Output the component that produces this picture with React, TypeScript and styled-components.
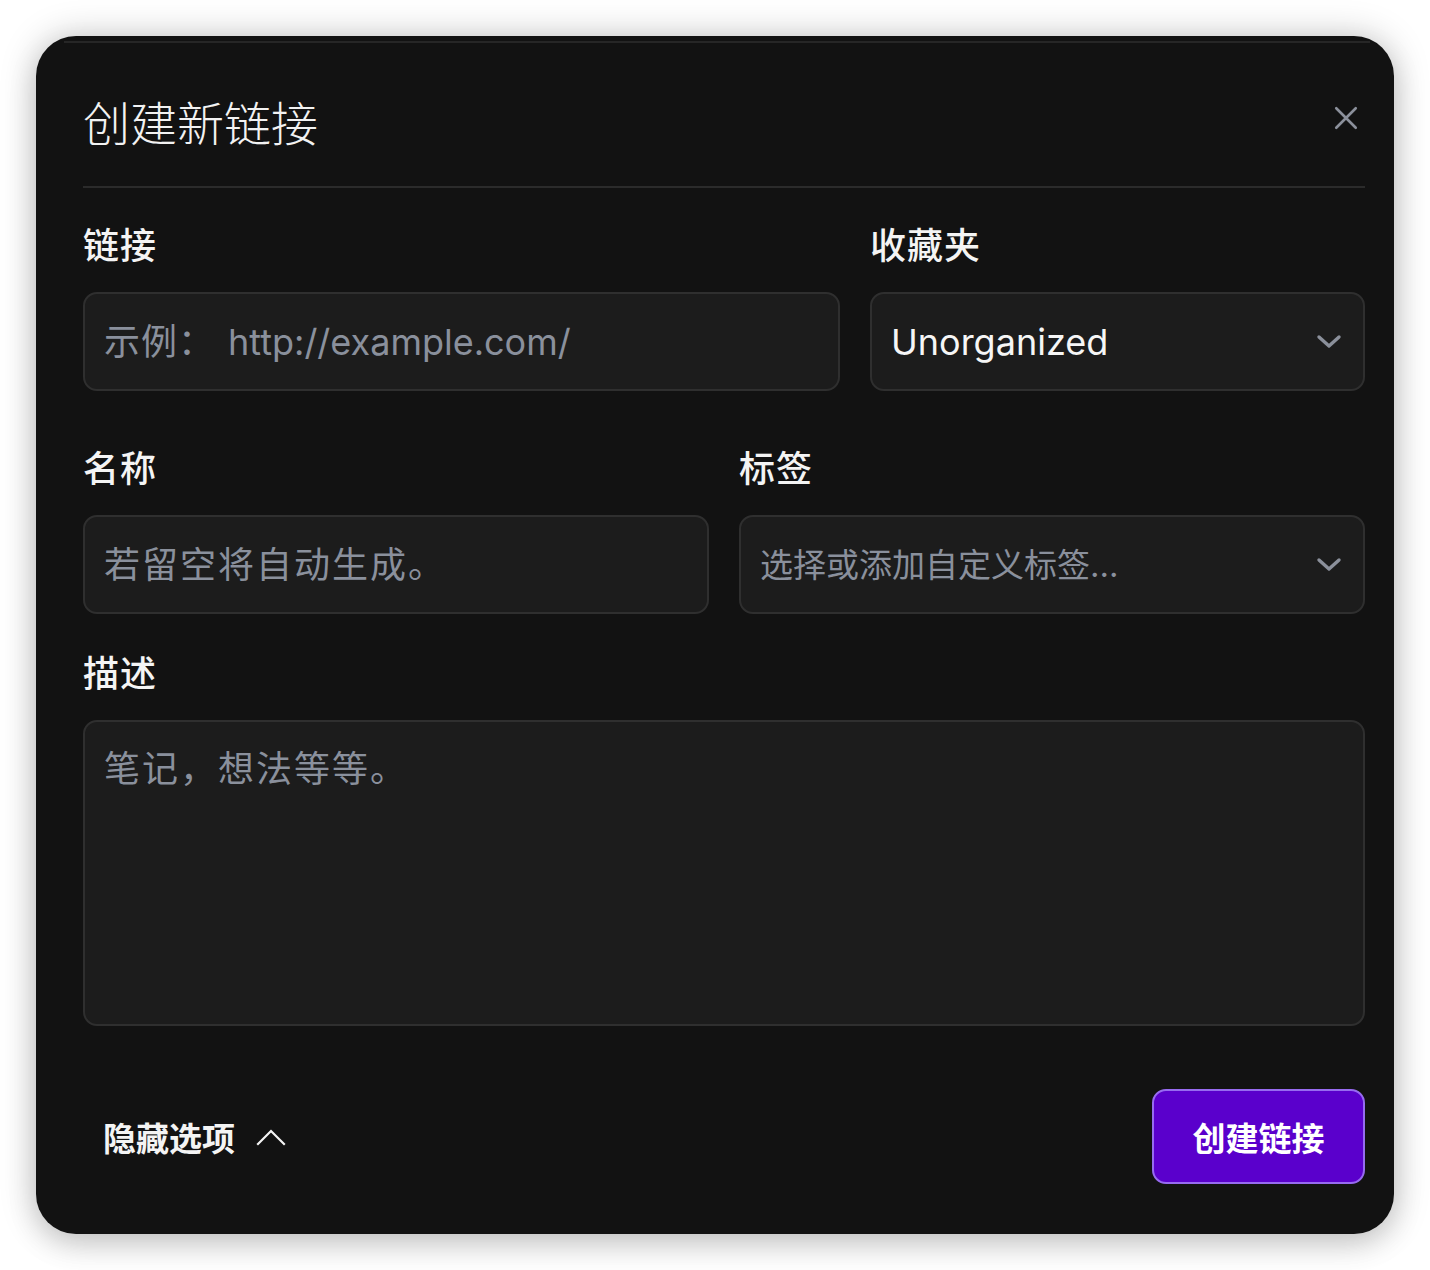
import React from "react";
import styled, { createGlobalStyle } from "styled-components";

//////////////////////// GLOBAL ////////////////////////

const GlobalStyle = createGlobalStyle`
  html, body {
    margin: 0;
    padding: 0;
    background: #ffffff;
  }
  body {
    font-family: "Inter", "Noto Sans CJK SC", sans-serif;
  }
  * {
    box-sizing: border-box;
  }
`;

//////////////////////// STYLED-COMPONENTS ////////////////////////

const Page = styled.div`
  padding: 36px;
`;

const Card = styled.div`
  position: relative;
  width: 1358px;
  height: 1198px;
  padding: 57px 29px 50px 47px;
  border-radius: 40px;
  background-color: #121212;
  box-shadow: 0 0 36px rgba(0, 0, 0, 0.22), 0 12px 30px rgba(0, 0, 0, 0.12);
  display: flex;
  flex-direction: column;

  &::before {
    content: "";
    position: absolute;
    top: 5px;
    left: 28px;
    right: 24px;
    height: 2px;
    background: #262626;
  }
`;

const Header = styled.div`
  display: flex;
  align-items: center;
  justify-content: space-between;
  height: 56px;
`;

const Title = styled.h2`
  margin: 0;
  font-family: "Noto Sans CJK SC", sans-serif;
  font-size: 47px;
  font-weight: 300;
  line-height: 56px;
  color: #f2f2f2;
`;

const CloseButton = styled.button`
  display: flex;
  align-items: center;
  justify-content: center;
  width: 36px;
  height: 36px;
  margin-right: 1px;
  margin-top: -7px;
  padding: 0;
  border: 0;
  background: transparent;
  color: #8b909b;
  cursor: pointer;
`;

const Divider = styled.div`
  height: 2px;
  margin-top: 37px;
  background-color: #2b2b2b;
`;

const Row = styled.div<{ $cols: string; $mt: number }>`
  display: grid;
  grid-template-columns: ${(p) => p.$cols};
  column-gap: 30px;
  margin-top: ${(p) => p.$mt}px;
`;

const Field = styled.div`
  display: flex;
  flex-direction: column;
  gap: 27px;
  min-width: 0;
`;

const Label = styled.label`
  font-family: "Noto Sans CJK SC", sans-serif;
  font-size: 36px;
  font-weight: 500;
  letter-spacing: 1px;
  line-height: 44px;
  color: #f4f4f4;
`;

const Box = styled.div<{ $h: number }>`
  position: relative;
  display: flex;
  align-items: center;
  height: ${(p) => p.$h}px;
  padding: 0 22px 0 19px;
  border: 2px solid #2f2f2f;
  border-radius: 14px;
  background-color: #1c1c1c;
`;

const TextArea = styled(Box)`
  align-items: flex-start;
  padding-top: 22px;
`;

const Placeholder = styled.span<{ $size?: number; $spacing?: number }>`
  flex: 1;
  font-size: ${(p) => p.$size ?? 36}px;
  letter-spacing: ${(p) => p.$spacing ?? 0}px;
  line-height: 50px;
  color: #8a909c;
  white-space: nowrap;
`;

const Prefix = styled.span`
  margin-right: 13px;
  letter-spacing: 1px;
`;

const Value = styled.span`
  flex: 1;
  font-size: 36px;
  line-height: 50px;
  color: #f6f6f6;
`;

const Chevron = styled.span`
  display: flex;
  margin-right: -1px;
  color: #8b909b;
`;

const Footer = styled.div`
  display: flex;
  align-items: center;
  justify-content: space-between;
  margin-top: auto;
`;

const ToggleButton = styled.button`
  display: flex;
  align-items: center;
  gap: 21px;
  margin-left: 20px;
  padding: 0;
  border: 0;
  background: transparent;
  font-family: "Noto Sans CJK SC", sans-serif;
  font-size: 33px;
  font-weight: 700;
  color: #f4f4f4;
  cursor: pointer;
`;

const PrimaryButton = styled.button`
  width: 213px;
  height: 95px;
  border: 2px solid #976bf0;
  border-radius: 14px;
  background-color: #5a00cc;
  font-family: "Noto Sans CJK SC", sans-serif;
  font-size: 33px;
  font-weight: 700;
  color: #ffffff;
  cursor: pointer;
`;

//////////////////////// ICONS ////////////////////////

const XIcon = () => (
  <svg width="26" height="26" viewBox="0 0 24 24" fill="none" stroke="currentColor" strokeWidth="2.4" strokeLinecap="round">
    <path d="M3 3 L21 21 M21 3 L3 21" />
  </svg>
);

const DownIcon = () => (
  <svg width="26" height="16" viewBox="0 0 26 16" fill="none" stroke="currentColor" strokeWidth="3.4" strokeLinecap="round" strokeLinejoin="round">
    <path d="M3 3 L13 12 L23 3" />
  </svg>
);

const UpIcon = () => (
  <svg width="30" height="18" viewBox="0 0 30 18" fill="none" stroke="currentColor" strokeWidth="2.2" strokeLinecap="square">
    <path d="M2 16 L15 3 L28 16" />
  </svg>
);

//////////////////////// COMPONENT ////////////////////////

const App = () => {
  return (
    <>
      <GlobalStyle />
      <Page>
        <Card>
          <Header>
            <Title>创建新链接</Title>
            <CloseButton aria-label="close">
              <XIcon />
            </CloseButton>
          </Header>
          <Divider />

          <Row $cols="757fr 495fr" $mt={33}>
            <Field>
              <Label>链接</Label>
              <Box $h={99}>
                <Placeholder>
                  <Prefix>示例：</Prefix>
                  http://example.com/
                </Placeholder>
              </Box>
            </Field>
            <Field>
              <Label>收藏夹</Label>
              <Box $h={99}>
                <Value>Unorganized</Value>
                <Chevron>
                  <DownIcon />
                </Chevron>
              </Box>
            </Field>
          </Row>

          <Row $cols="1fr 1fr" $mt={53}>
            <Field>
              <Label>名称</Label>
              <Box $h={99}>
                <Placeholder $spacing={2}>若留空将自动生成。</Placeholder>
              </Box>
            </Field>
            <Field>
              <Label>标签</Label>
              <Box $h={99}>
                <Placeholder $size={33}>选择或添加自定义标签...</Placeholder>
                <Chevron>
                  <DownIcon />
                </Chevron>
              </Box>
            </Field>
          </Row>

          <Row $cols="1fr" $mt={35}>
            <Field>
              <Label>描述</Label>
              <TextArea $h={306}>
                <Placeholder $spacing={2}>笔记，想法等等。</Placeholder>
              </TextArea>
            </Field>
          </Row>

          <Footer>
            <ToggleButton>
              隐藏选项
              <UpIcon />
            </ToggleButton>
            <PrimaryButton>创建链接</PrimaryButton>
          </Footer>
        </Card>
      </Page>
    </>
  );
};

//////////////////////// EXPORT ////////////////////////

export default App;
